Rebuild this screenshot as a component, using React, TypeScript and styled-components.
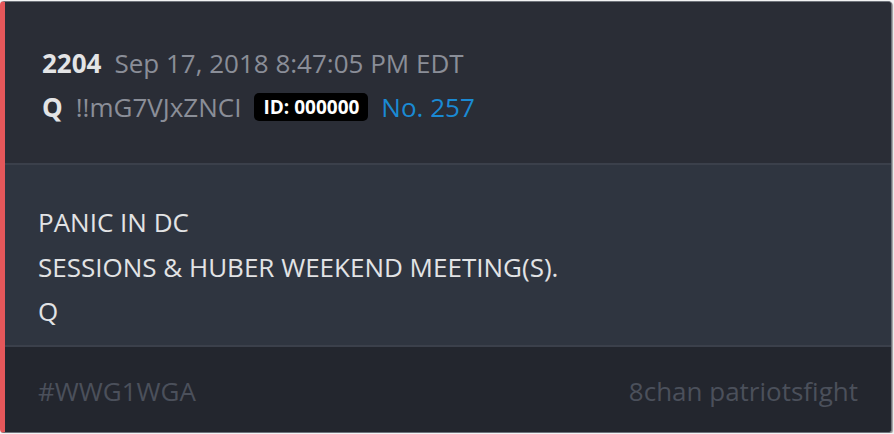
import React from "react";
import styled, { createGlobalStyle } from "styled-components";

const GlobalStyle = createGlobalStyle`
  html, body {
    margin: 0;
    padding: 0;
    background: #f2f3f4;
  }
  body {
    font-family: "Open Sans", "Liberation Sans", sans-serif;
  }
`;

const Card = styled.article`
  width: 892px;
  height: 432px;
  margin-top: 1px;
  box-sizing: border-box;
  display: flex;
  flex-direction: column;
  border: 1px solid #6f737b;
  border-left: 5px solid #e5575a;
  border-radius: 4px;
  overflow: hidden;
  background: #2a2d36;
  box-shadow: 1px 1px 1px rgba(0, 0, 0, 0.35);
`;

const Header = styled.header`
  height: 163px;
  box-sizing: border-box;
  padding: 39px 0 0 37px;
  background: #2a2d36;
  border-bottom: 2px solid #3b404b;
`;

const Row = styled.div`
  display: flex;
  align-items: center;
  gap: 13px;
  height: 44px;
`;

const Num = styled.span`
  color: #e3e4e6;
  font-weight: 700;
  font-size: 26px;
`;

const Muted = styled.span`
  color: #8a8e98;
  font-size: 26px;
`;

const Badge = styled.span`
  background: #000000;
  color: #ffffff;
  font-weight: 700;
  font-size: 19px;
  line-height: 26px;
  padding: 1px 9px 1px;
  border-radius: 5px;
`;

const PostLink = styled.span`
  color: #1a8ad4;
  font-size: 26px;
`;

const Body = styled.section`
  height: 182px;
  box-sizing: border-box;
  padding: 35px 0 0 33px;
  background: #2f3540;
  border-bottom: 2px solid #3b404b;
  color: #e2e3e5;
  font-size: 26px;
  line-height: 44.5px;
`;

const Footer = styled.footer`
  flex: 1;
  display: flex;
  align-items: center;
  justify-content: space-between;
  padding: 2px 33px 0 33px;
  background: #23262e;
  color: #4b505b;
  font-size: 26px;
`;

export default function App() {
  return (
    <>
      <GlobalStyle />
      <Card>
        <Header>
          <Row>
            <Num>2204</Num>
            <Muted>Sep 17, 2018 8:47:05 PM EDT</Muted>
          </Row>
          <Row>
            <Num>Q</Num>
            <Muted>!!mG7VJxZNCI</Muted>
            <Badge>ID: 000000</Badge>
            <PostLink>No. 257</PostLink>
          </Row>
        </Header>
        <Body>
          <div>PANIC IN DC</div>
          <div>SESSIONS &amp; HUBER WEEKEND MEETING(S).</div>
          <div>Q</div>
        </Body>
        <Footer>
          <span>#WWG1WGA</span>
          <span>8chan patriotsfight</span>
        </Footer>
      </Card>
    </>
  );
}
